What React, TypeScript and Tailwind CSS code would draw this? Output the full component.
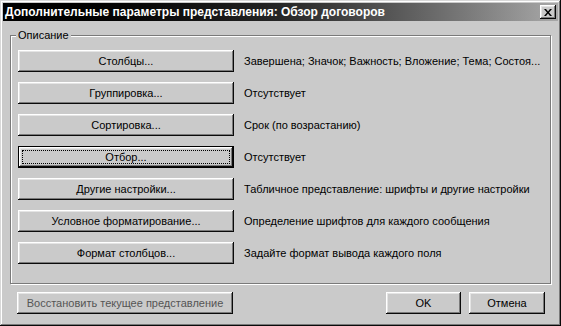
import React from "react";

const rows = [
  { button: "Столбцы...", text: "Завершена; Значок; Важность; Вложение; Тема; Состоя..." },
  { button: "Группировка...", text: "Отсутствует" },
  { button: "Сортировка...", text: "Срок (по возрастанию)" },
  { button: "Отбор...", text: "Отсутствует", focused: true },
  { button: "Другие настройки...", text: "Табличное представление: шрифты и другие настройки" },
  { button: "Условное форматирование...", text: "Определение шрифтов для каждого сообщения" },
  { button: "Формат столбцов...", text: "Задайте формат вывода каждого поля" },
];

const raised =
  "bg-[#cacaca] shadow-[inset_-1px_-1px_#0a0a0a,inset_1px_1px_#ffffff,inset_-2px_-2px_#7a7a7a,inset_2px_2px_#e4e4e4]";

function Button({
  label,
  width,
  focused,
  disabled,
}: {
  label: string;
  width: string;
  focused?: boolean;
  disabled?: boolean;
}) {
  if (focused) {
    return (
      <div className={`${width} shrink-0 h-[22px] border border-black`}>
        <div className={`${raised} h-full flex items-center justify-center p-[3px]`}>
          <div className="w-full h-full border border-dotted border-black flex items-center justify-center">
            {label}
          </div>
        </div>
      </div>
    );
  }
  return (
    <div
      className={`${width} shrink-0 h-[22px] ${raised} flex items-center justify-center whitespace-nowrap ${
        disabled ? "text-[#555555]" : ""
      }`}
    >
      {label}
    </div>
  );
}

export default function App() {
  return (
    <div
      className="w-[561px] h-[326px] bg-[#cacaca] p-[3px] flex flex-col text-[11px] text-black shadow-[inset_-1px_-1px_#0a0a0a,inset_1px_1px_#d8d8d8,inset_-2px_-2px_#7a7a7a,inset_2px_2px_#ffffff]"
      style={{ fontFamily: '"Liberation Sans", Arial, sans-serif' }}
    >
      {/* title bar */}
      <div className="h-[18px] flex items-center justify-between pl-[2px] pr-[2px] bg-gradient-to-r from-[#000000] via-[#262626] to-[#a8a8a8]">
        <span className="text-white font-bold text-[12px] leading-none whitespace-nowrap">
          Дополнительные параметры представления: Обзор договоров
        </span>
        <div className={`w-[16px] h-[14px] ${raised} flex items-center justify-center`}>
          <svg width="8" height="7" viewBox="0 0 8 7">
            <path d="M0 0h2l2 2.5L6 0h2L5 3.5 8 7H6L4 4.5 2 7H0l3-3.5z" fill="#000" />
          </svg>
        </div>
      </div>

      <div className="flex-1 flex flex-col px-[7px] pt-[14px]">
        {/* group box */}
        <div className="relative border border-[#7a7a7a] shadow-[inset_1px_1px_#ffffff,1px_1px_#ffffff] pl-[7px] pt-[14px] pb-[19px] flex flex-col gap-[10px]">
          <span className="absolute left-[5px] -top-[8px] bg-[#cacaca] px-[2px] leading-[14px]">
            Описание
          </span>
          {rows.map((row) => (
            <div key={row.button} className="flex items-center gap-[10px]">
              <Button label={row.button} width="w-[216px]" focused={row.focused} />
              <span className="whitespace-nowrap">{row.text}</span>
            </div>
          ))}
        </div>

        {/* bottom buttons */}
        <div className="flex items-center mt-[8px] pl-[7px] pr-[6px]">
          <Button label="Восстановить текущее представление" width="w-[216px]" disabled />
          <div className="flex-1" />
          <Button label="OK" width="w-[75px]" />
          <div className="w-[8px]" />
          <Button label="Отмена" width="w-[76px]" />
        </div>
      </div>
    </div>
  );
}
